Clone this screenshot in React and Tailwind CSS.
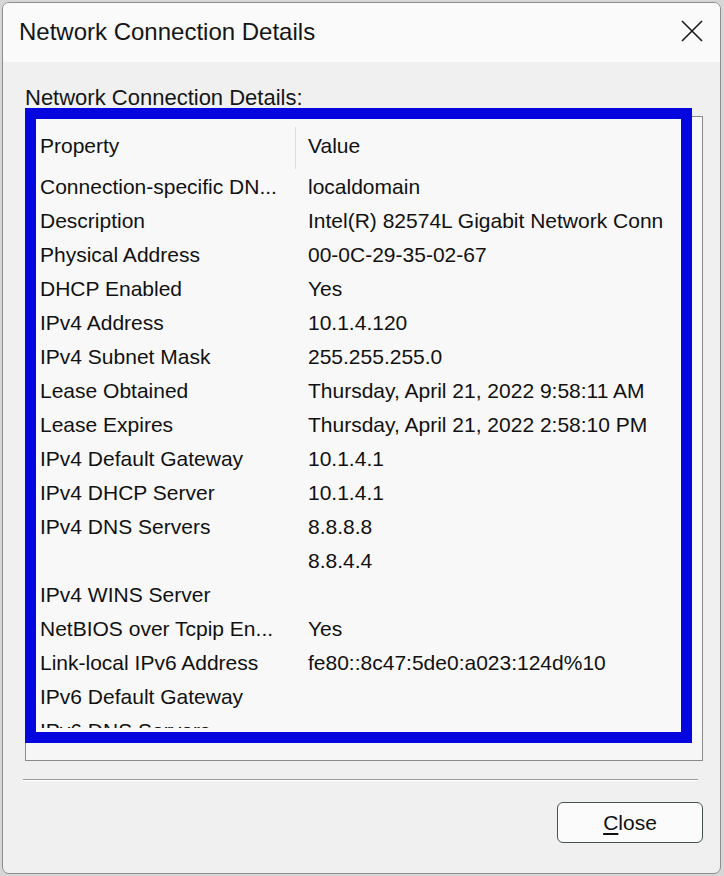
const rows = [
  ["Connection-specific DN...", "localdomain"],
  ["Description", "Intel(R) 82574L Gigabit Network Connection"],
  ["Physical Address", "00-0C-29-35-02-67"],
  ["DHCP Enabled", "Yes"],
  ["IPv4 Address", "10.1.4.120"],
  ["IPv4 Subnet Mask", "255.255.255.0"],
  ["Lease Obtained", "Thursday, April 21, 2022 9:58:11 AM"],
  ["Lease Expires", "Thursday, April 21, 2022 2:58:10 PM"],
  ["IPv4 Default Gateway", "10.1.4.1"],
  ["IPv4 DHCP Server", "10.1.4.1"],
  ["IPv4 DNS Servers", "8.8.8.8"],
  ["", "8.8.4.4"],
  ["IPv4 WINS Server", ""],
  ["NetBIOS over Tcpip En...", "Yes"],
  ["Link-local IPv6 Address", "fe80::8c47:5de0:a023:124d%10"],
  ["IPv6 Default Gateway", ""],
  ["IPv6 DNS Servers", ""],
];

const font = { fontFamily: '"Liberation Sans", Arial, sans-serif' };

export default function App() {
  return (
    <div className="w-[724px] h-[876px] bg-[#d6d6d6] pt-[2px] pl-[2px] text-[#111]" style={font}>
      <div className="w-[719px] h-[872px] flex flex-col border border-[#8e8e8e] rounded-[7px] overflow-hidden bg-[#f0f0f0]">
        {/* title bar */}
        <div className="h-[59px] shrink-0 flex items-center justify-between bg-[#fafafa] pl-[16px] pr-[17px]">
          <span className="text-[24px] leading-none mt-[-1px] text-[#151515]">Network Connection Details</span>
          <svg width="22" height="22" viewBox="0 0 22 22" className="mt-[-3px]">
            <path d="M1 1 L21 21 M21 1 L1 21" stroke="#1a1a1a" strokeWidth="1.6" />
          </svg>
        </div>

        <div className="flex flex-col pl-[22px] pr-[17px]">
          <div className="mt-[22px] text-[22px] leading-[28px] text-[#161616]">Network Connection Details:</div>

          {/* list view */}
          <div className="relative mt-[4px] h-[645px] border border-[#8a8a8a] bg-[#f6f6f6]">
            <div className="h-[616px] bg-[#f8f8f8] text-[21px]">
              <div className="h-[611px] overflow-hidden">
                <div className="flex h-[53px]">
                  <div className="w-[269px] pl-[14px] pt-[16px] leading-[26px]">Property</div>
                  <div className="w-px mt-[10px] h-[42px] bg-[#dedede]"></div>
                  <div className="pl-[12px] pt-[16px] leading-[26px]">Value</div>
                </div>
                {rows.map(([k, v], i) => (
                  <div key={i} className="flex h-[34px] items-center leading-[34px]">
                    <div className="w-[270px] pl-[14px] whitespace-nowrap overflow-hidden">{k}</div>
                    <div className="w-[368px] pl-[12px] whitespace-nowrap overflow-hidden">{v}</div>
                  </div>
                ))}
              </div>
            </div>
            {/* highlight frame drawn over the list */}
            <div className="absolute left-[-1px] top-[-9px] w-[667px] h-[635px] border-[11px] border-[#0505de] pointer-events-none"></div>
          </div>

          {/* separator */}
          <div className="mt-[18px] mr-[5px] ml-[-2px] h-[2px] border-t border-[#9a9a9a] bg-white"></div>

          <div className="flex justify-end mt-[21px]">
            <button className="w-[146px] h-[41px] rounded-[6px] border border-[#46534f] bg-[#fbfbfb] text-[21px] leading-none">
              <span className="underline underline-offset-[3px]">C</span>lose
            </button>
          </div>
        </div>
      </div>
    </div>
  );
}
